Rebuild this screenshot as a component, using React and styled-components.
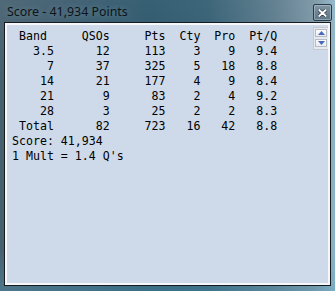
import styled, { createGlobalStyle } from "styled-components";

const GlobalStyle = createGlobalStyle`
  html, body {
    margin: 0;
    padding: 0;
    background: #2f5569;
  }
`;

const rows = [
  { band: "3.5", qsos: 12, pts: 113, cty: 3, pro: 9, ptq: "9.4" },
  { band: "7", qsos: 37, pts: 325, cty: 5, pro: 18, ptq: "8.8" },
  { band: "14", qsos: 21, pts: 177, cty: 4, pro: 9, ptq: "8.4" },
  { band: "21", qsos: 9, pts: 83, cty: 2, pro: 4, ptq: "9.2" },
  { band: "28", qsos: 3, pts: 25, cty: 2, pro: 2, ptq: "8.3" },
  { band: "Total", qsos: 82, pts: 723, cty: 16, pro: 42, ptq: "8.8" },
];

const Window = styled.div`
  width: 335px;
  height: 291px;
  display: flex;
  flex-direction: column;
  box-sizing: border-box;
  background:
    linear-gradient(180deg, rgba(255, 255, 255, 0.06) 0%, rgba(0, 0, 0, 0) 30%, rgba(0, 0, 0, 0) 85%, rgba(90, 160, 190, 0.35) 100%),
    linear-gradient(90deg, #46606f 0%, #3a5b6e 20%, #2b566b 45%, #325d72 62%, #5a7a8b 82%, #7a95a4 94%, #8fb5c8 100%);
`;

const TitleBar = styled.div`
  height: 22px;
  display: flex;
  align-items: flex-start;
  justify-content: space-between;
  flex-shrink: 0;
`;

const Title = styled.span`
  font-family: "Noto Sans", "Open Sans", sans-serif;
  font-size: 12.4px;
  line-height: 16px;
  margin: 4px 0 0 7px;
  color: #0c1418;
  text-shadow: 0 0 6px rgba(200, 220, 230, 0.35);
  white-space: nowrap;
`;

const CloseButton = styled.div`
  width: 19px;
  height: 17px;
  margin: 4px 3px 0 0;
  box-sizing: border-box;
  border: 1px solid #2a3a46;
  border-radius: 2px;
  box-shadow: inset 0 0 0 1px rgba(200, 215, 225, 0.45);
  background: linear-gradient(180deg, #8296a4 0%, #6b8393 50%, #5f7888 100%);
  display: flex;
  align-items: center;
  justify-content: center;
`;

const ClientEdge = styled.div`
  flex: 1;
  margin: 0 4px 5px 4px;
  border: 1px solid #141a1e;
  display: flex;
  min-height: 0;
`;

const Client = styled.div`
  flex: 1;
  border: 2px solid #f5f7fa;
  background: #cedaea;
  display: flex;
  align-items: flex-start;
  min-height: 0;
`;

const Report = styled.div`
  flex: 1;
  padding: 4px 0 0 5px;
  font-family: "DejaVu Sans Mono", "Liberation Mono", monospace;
  font-size: 11.6px;
  line-height: 15px;
  color: #000;
`;

const Grid = styled.div`
  display: grid;
  grid-template-columns: 6ch 8ch 8ch 5ch 5ch 6ch;
`;

const Cell = styled.span`
  text-align: right;
  white-space: pre;
  padding-right: ${(p) => (p.$shift ? "1ch" : "0")};
`;

const Line = styled.div`
  white-space: pre;
`;

const Spinner = styled.div`
  width: 15px;
  margin: 2px 0 0 0;
  box-sizing: border-box;
  border: 1px solid #c3c9d0;
  border-right: none;
  background: #e6eaef;
  display: flex;
  flex-direction: column;
  gap: 2px;
  padding: 1px 1px 2px 1px;
`;

const SpinButton = styled.div`
  height: 8px;
  box-sizing: border-box;
  border: 1px solid #b5bcc5;
  background: linear-gradient(180deg, #fbfcfd, #e8edf3);
  display: flex;
  align-items: center;
  justify-content: center;
`;

function Arrow({ down }) {
  return (
    <svg width="7" height="4" viewBox="0 0 7 4">
      <polygon
        points={down ? "0,0 7,0 3.5,4" : "3.5,0 7,4 0,4"}
        fill="#4a68b8"
      />
    </svg>
  );
}

export default function App() {
  return (
    <Window>
      <GlobalStyle />
      <TitleBar>
        <Title>Score - 41,934 Points</Title>
        <CloseButton>
          <svg width="9" height="8" viewBox="0 0 9 8">
            <path
              d="M1.2 1 L7.8 7 M7.8 1 L1.2 7"
              stroke="#2a3540"
              strokeWidth="3.2"
              strokeLinecap="round"
            />
            <path
              d="M1.2 1 L7.8 7 M7.8 1 L1.2 7"
              stroke="#ffffff"
              strokeWidth="1.8"
              strokeLinecap="round"
            />
          </svg>
        </CloseButton>
      </TitleBar>
      <ClientEdge>
        <Client>
          <Report>
            <Grid>
              <Cell $shift>Band</Cell>
              <Cell>QSOs</Cell>
              <Cell>Pts</Cell>
              <Cell>Cty</Cell>
              <Cell>Pro</Cell>
              <Cell>Pt/Q</Cell>
              {rows.map((r) => [
                <Cell key={r.band + "b"}>{r.band}</Cell>,
                <Cell key={r.band + "q"}>{r.qsos}</Cell>,
                <Cell key={r.band + "p"}>{r.pts}</Cell>,
                <Cell key={r.band + "c"}>{r.cty}</Cell>,
                <Cell key={r.band + "r"}>{r.pro}</Cell>,
                <Cell key={r.band + "t"}>{r.ptq}</Cell>,
              ])}
            </Grid>
            <Line>Score: 41,934</Line>
            <Line>1 Mult = 1.4 Q's</Line>
          </Report>
          <Spinner>
            <SpinButton>
              <Arrow />
            </SpinButton>
            <SpinButton>
              <Arrow down />
            </SpinButton>
          </Spinner>
        </Client>
      </ClientEdge>
    </Window>
  );
}
